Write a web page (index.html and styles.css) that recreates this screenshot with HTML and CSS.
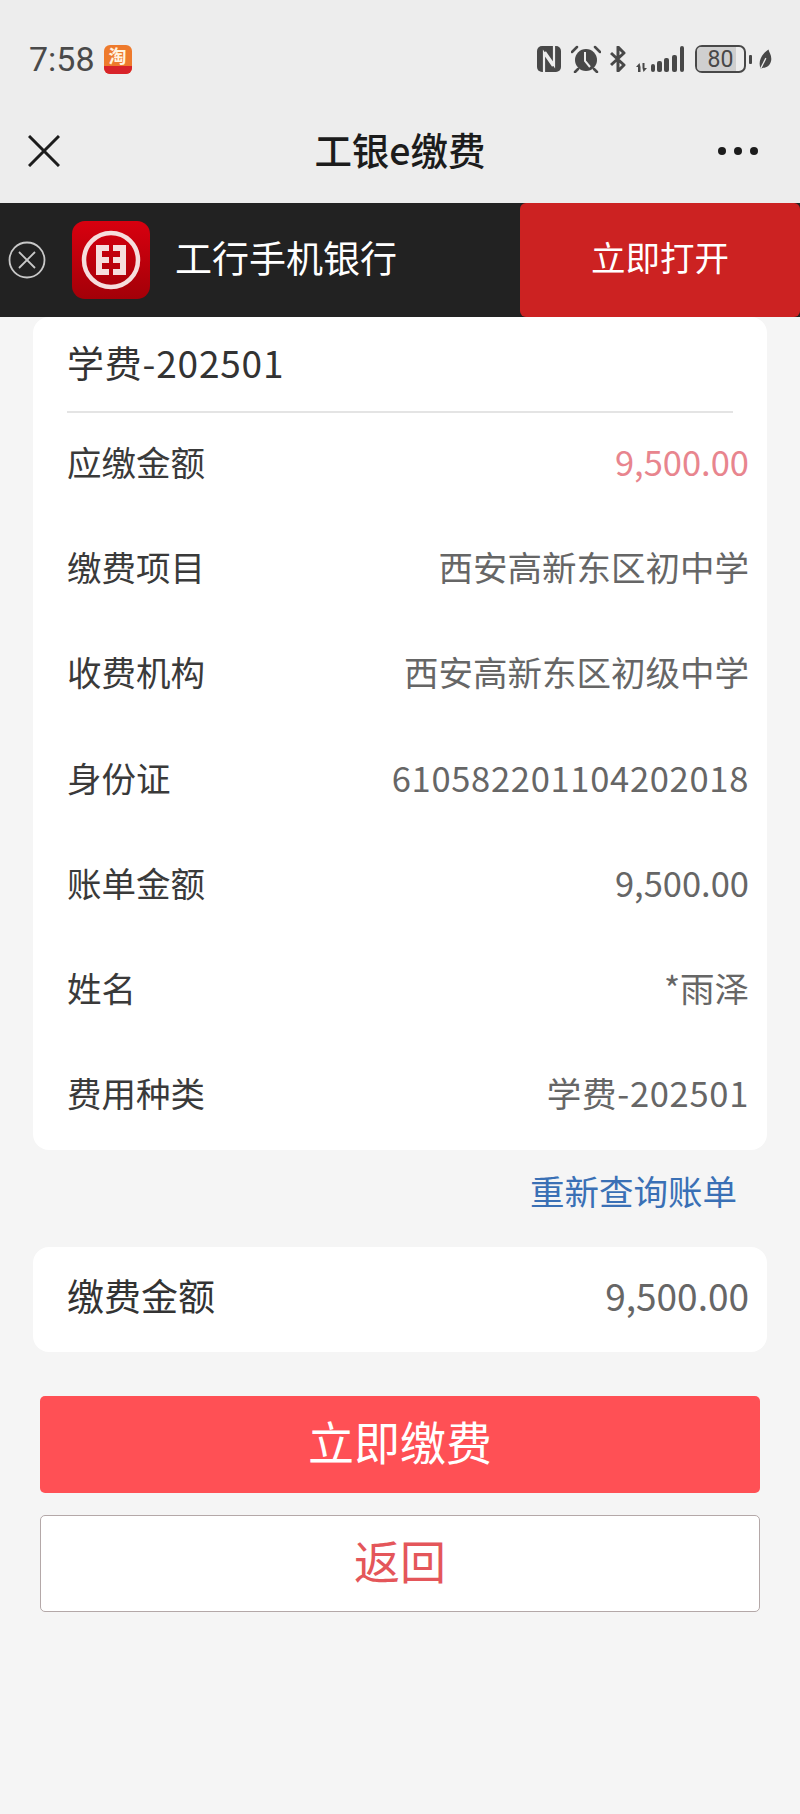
FILE: index.html
```html
<!DOCTYPE html>
<html lang="zh-CN">
<head>
    <meta charset="UTF-8">
    <meta name="viewport" content="width=device-width, initial-scale=1.0">
    <title>工银e缴费</title>
    <link rel="stylesheet" href="styles.css">
</head>
<body>
    <div class="status-bar">
        <div class="status-left">
            <span class="time">7:58</span>
            <span class="app-badge">
                <span class="app-badge-char">淘</span>
                <span class="app-badge-band"></span>
            </span>
        </div>
        <div class="status-right">
            <svg class="icon-nfc" width="24" height="26" viewBox="0 0 24 26">
                <rect width="24" height="26" rx="5" fill="#484848"/>
                <path d="M7 26V7l9 13M17 0v19L8 6" fill="none" stroke="#ededed" stroke-width="2.200"/>
            </svg>
            <svg class="icon-alarm" width="30" height="28" viewBox="0 0 30 28">
                <circle cx="15" cy="15" r="11" fill="#484848"/>
                <path d="M14 7v9l5 6" fill="none" stroke="#ededed" stroke-width="2"/>
                <path d="M1 7l5-5M29 7l-5-5" fill="none" stroke="#484848" stroke-width="2.500" stroke-linecap="round"/>
                <path d="M7 24l-3 3M23 24l3 3" fill="none" stroke="#484848" stroke-width="2.500" stroke-linecap="round"/>
            </svg>
            <svg class="icon-bt" width="16" height="26" viewBox="0 0 16 26">
                <path d="M1 7l13 12-6 6V1l6 6L1 19" fill="none" stroke="#484848" stroke-width="3" stroke-linejoin="round"/>
            </svg>
            <svg class="icon-signal" width="48" height="27" viewBox="0 0 48 27">
                <g fill="#484848">
                    <path d="M2 26v-5H0l3.500-4 1 4v5zM6.500 17h2v5H11l-3.500 4-1-4z"/>
                    <rect x="15" y="18" width="4" height="8" rx="2"/>
                    <rect x="21" y="15" width="5" height="11" rx="2"/>
                    <rect x="28" y="12" width="5" height="14" rx="2"/>
                    <rect x="36" y="9" width="5" height="17" rx="2"/>
                    <rect x="44" y="0" width="4" height="26" rx="2"/>
                </g>
            </svg>
            <div class="battery">
                <div class="battery-body"><span class="battery-fill"></span><span class="battery-text">80</span></div>
                <span class="battery-tip"></span>
            </div>
            <svg class="icon-leaf" width="14" height="22" viewBox="0 0 16 22">
                <path d="M12 0C13 4 16 7 15 13c-1 5-5 8-9 8l-3 1C0 15 3 6 12 0z" fill="#484848"/>
                <path d="M3 22L9 10" stroke="#ededed" stroke-width="1.500"/>
            </svg>
        </div>
    </div>

    <header class="nav-bar">
        <svg class="nav-close" width="32" height="32" viewBox="0 0 32 32">
            <path d="M1 1l30 30M31 1L1 31" fill="none" stroke="#1c1c1c" stroke-width="3"/>
        </svg>
        <h1 class="nav-title">工银e缴费</h1>
        <div class="nav-more"><span></span><span></span><span></span></div>
    </header>

    <div class="app-banner">
        <svg class="banner-close" width="38" height="38" viewBox="0 0 38 38">
            <circle cx="19" cy="19" r="17.500" fill="none" stroke="#c8c8c8" stroke-width="1.800"/>
            <path d="M11 11l16 16M27 11L11 27" fill="none" stroke="#c8c8c8" stroke-width="1.800"/>
        </svg>
        <svg class="banner-logo" width="78" height="78" viewBox="0 0 78 78">
            <defs>
                <linearGradient id="logoRed" x1="0" y1="0" x2="0" y2="1">
                    <stop offset="0" stop-color="#d8000f"/>
                    <stop offset="1" stop-color="#a30008"/>
                </linearGradient>
            </defs>
            <rect width="78" height="78" rx="13" fill="url(#logoRed)"/>
            <circle cx="39" cy="39" r="27" fill="none" stroke="#f6dedd" stroke-width="4.500"/>
            <g fill="#f6dedd">
                <path d="M24 24H37V30H30V36H37V42H30V48H37V54H24Z"/>
                <path d="M54 24H41V30H48V36H41V42H48V48H41V54H54Z"/>
            </g>
        </svg>
        <span class="banner-name">工行手机银行</span>
        <button class="banner-open">立即打开</button>
    </div>

    <main class="content">
        <section class="card bill-card">
            <div class="bill-title">学费-202501</div>
            <div class="row"><span class="row-label">应缴金额</span><span class="row-value due">9,500.00</span></div>
            <div class="row"><span class="row-label">缴费项目</span><span class="row-value">西安高新东区初中学</span></div>
            <div class="row"><span class="row-label">收费机构</span><span class="row-value">西安高新东区初级中学</span></div>
            <div class="row"><span class="row-label">身份证</span><span class="row-value wide">610582201104202018</span></div>
            <div class="row"><span class="row-label">账单金额</span><span class="row-value">9,500.00</span></div>
            <div class="row"><span class="row-label">姓名</span><span class="row-value">*雨泽</span></div>
            <div class="row"><span class="row-label">费用种类</span><span class="row-value wide">学费-202501</span></div>
        </section>

        <div class="requery"><a class="requery-link">重新查询账单</a></div>

        <section class="card pay-card">
            <span class="pay-label">缴费金额</span>
            <span class="pay-value">9,500.00</span>
        </section>

        <div class="actions">
            <button class="btn btn-primary">立即缴费</button>
            <button class="btn btn-back">返回</button>
        </div>
    </main>
</body>
</html>
```

FILE: styles.css
```css
* {
    box-sizing: border-box;
}
body {
    font-family: "Noto Sans CJK SC", "Noto Sans", sans-serif;
    margin: 0;
    padding: 0;
    min-height: 1814px;
    background-color: #f5f5f5;
    color: #333;
}

/* status bar */
.status-bar {
    height: 100px;
    background: #ededed;
    padding: 18px 28px 0 29px;
    display: flex;
    justify-content: space-between;
    align-items: center;
}
.status-left {
    display: flex;
    align-items: center;
    gap: 9px;
}
.time {
    font-family: Roboto, sans-serif;
    font-size: 34px;
    color: #4a4a4a;
    line-height: 40px;
}
.app-badge {
    width: 28px;
    height: 29px;
    border-radius: 6px;
    background: #ee7a2c;
    display: flex;
    flex-direction: column;
    align-items: center;
}
.app-badge-char {
    font-size: 18px;
    line-height: 21px;
    color: #fff3e0;
    font-weight: 700;
}
.app-badge-band {
    flex: 1;
    width: 100%;
    background: #d8232a;
    border-radius: 0 0 6px 6px;
}
.status-right {
    display: flex;
    align-items: center;
}
.icon-nfc {
    margin-right: 10px;
}
.icon-alarm {
    margin-right: 9px;
}
.icon-bt {
    margin-right: 10px;
}
.icon-signal {
    margin-right: 11px;
}
.battery {
    display: flex;
    align-items: center;
    gap: 3px;
    margin-right: 6px;
}
.battery-body {
    position: relative;
    width: 51px;
    height: 28px;
    border: 2.500px solid #484848;
    border-radius: 7px;
    display: flex;
    align-items: center;
    justify-content: center;
}
.battery-fill {
    position: absolute;
    left: 0;
    top: 0;
    bottom: 0;
    width: 84%;
    background: #cfcfcf;
    border-radius: 4px 0 0 4px;
}
.battery-text {
    position: relative;
    font-family: Roboto, sans-serif;
    font-size: 23px;
    line-height: 23px;
    color: #484848;
}
.battery-tip {
    width: 3px;
    height: 9px;
    background: #484848;
    border-radius: 1px;
}

/* nav */
.nav-bar {
    height: 103px;
    background: #ededed;
    display: flex;
    align-items: center;
    justify-content: space-between;
    padding: 0 42px 2px 28px;
    position: relative;
}
.nav-title {
    position: absolute;
    left: 0;
    right: 0;
    margin: 0;
    padding-bottom: 4px;
    text-align: center;
    font-size: 37.500px;
    font-weight: 500;
    color: #1c1c1c;
}
.nav-more {
    display: flex;
    gap: 8px;
}
.nav-more span {
    width: 8px;
    height: 8px;
    border-radius: 50%;
    background: #1c1c1c;
}

/* open in app banner */
.app-banner {
    height: 114px;
    background: #222;
    display: flex;
    align-items: center;
    padding-left: 8px;
}
.banner-logo {
    margin-left: 26px;
}
.banner-name {
    margin-left: 25px;
    padding-bottom: 6px;
    font-size: 37px;
    color: #fff;
    flex: 1;
}
.banner-open {
    width: 280px;
    height: 100%;
    border: none;
    border-radius: 6px;
    background: #cc2222;
    color: #fff;
    font-family: inherit;
    font-size: 34.500px;
    padding: 0 0 8px;
}

/* cards */
.content {
    padding: 0 33px;
}
.card {
    background: #fff;
    border-radius: 16px;
}
.bill-card {
    height: 833px;
}
.bill-title {
    height: 96px;
    margin: 0 34px;
    border-bottom: 2px solid #e4e4e4;
    font-size: 37px;
    line-height: 90px;
    letter-spacing: 0.800px;
    color: #333;
}
.row {
    height: 105.200px;
    display: flex;
    justify-content: space-between;
    align-items: center;
    padding: 0 18px 9px 34px;
    font-size: 34.500px;
}
.row-label {
    color: #3a3a3a;
}
.row-value {
    color: #666;
}
.row-value.due {
    color: #e8858e;
}
.row-value.wide {
    letter-spacing: 0.700px;
}
.requery {
    height: 97px;
    display: flex;
    align-items: center;
    justify-content: flex-end;
    padding: 0 30px 18px 0;
}
.requery-link {
    font-size: 34.500px;
    color: #3a70b5;
}
.pay-card {
    height: 105px;
    display: flex;
    justify-content: space-between;
    align-items: center;
    padding: 0 18px 9px 34px;
}
.pay-label {
    font-size: 37px;
    color: #333;
}
.pay-value {
    font-size: 37px;
    color: #666;
}

/* buttons */
.actions {
    padding: 44px 7px 0;
    display: flex;
    flex-direction: column;
    gap: 22px;
}
.btn {
    height: 97px;
    border-radius: 5px;
    font-family: inherit;
    font-size: 46px;
    padding: 0 0 9px;
}
.btn-primary {
    background: #ff5055;
    border: none;
    color: #fff;
}
.btn-back {
    background: #fff;
    border: 1px solid #b4a8a8;
    color: #e4565a;
}
```
